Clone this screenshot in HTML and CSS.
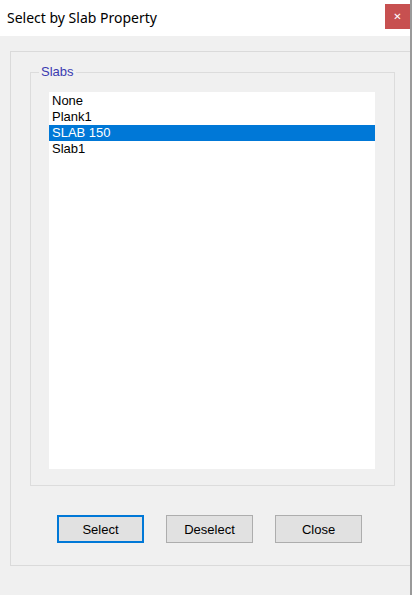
FILE: index.html
```html
<!DOCTYPE html>
<html>
<head>
<meta charset="utf-8">
<link rel="stylesheet" href="styles.css">
</head>
<body>
<div class="window">
  <div class="titlebar">
    <span class="title">Select by Slab Property</span>
    <span class="close">&#x2715;</span>
  </div>
  <div class="client">
    <div class="panel">
      <fieldset class="group">
        <legend class="group-label">Slabs</legend>
        <ul class="listbox">
          <li class="item">None</li>
          <li class="item">Plank1</li>
          <li class="item selected">SLAB 150</li>
          <li class="item">Slab1</li>
        </ul>
      </fieldset>
      <div class="buttons">
        <button class="btn default">Select</button>
        <button class="btn">Deselect</button>
        <button class="btn">Close</button>
      </div>
    </div>
  </div>
</div>
</body>
</html>
```
FILE: styles.css
```css
html, body {
  margin: 0;
  padding: 0;
  background: #f0f0f0;
}
body {
  width: 412px;
  height: 595px;
  overflow: hidden;
  font-family: "Liberation Sans", Arial, sans-serif;
  font-size: 13px;
}
.window {
  box-sizing: border-box;
  width: 412px;
  height: 595px;
  border-right: 2px solid #9a9a9a;
  display: flex;
  flex-direction: column;
}
.titlebar {
  height: 36px;
  background: #ffffff;
  display: flex;
  align-items: center;
  justify-content: space-between;
  padding-left: 7px;
  flex-shrink: 0;
}
.title {
  font-family: "Noto Sans", "Open Sans", sans-serif;
  font-size: 14px;
  color: #000;
  margin-top: -2px;
}
.close {
  width: 25px;
  height: 25px;
  margin-top: -4px;
  background: #c75050;
  color: #fff;
  font-family: "DejaVu Sans", sans-serif;
  font-size: 10px;
  font-weight: bold;
  display: flex;
  align-items: center;
  justify-content: center;
}
.client {
  flex: 1;
  padding: 15px 0 0 10px;
  display: flex;
  flex-direction: column;
}
.panel {
  box-sizing: border-box;
  height: 515px;
  border: 1px solid #dadada;
  border-right: none;
  padding: 12px 0 0 19px;
  display: flex;
  flex-direction: column;
}
.group {
  box-sizing: border-box;
  width: 365px;
  height: 422px;
  margin: 0;
  padding: 12px 18px 16px 18px;
  border: 1px solid #dcdcdc;
}
.group-label {
  color: #3a3ab0;
  padding: 0 2px;
  margin-left: -10px;
  font-size: 13px;
  line-height: 16px;
}
.listbox {
  list-style: none;
  margin: 0;
  padding: 1px 0 0 0;
  background: #ffffff;
  width: 326px;
  height: 377px;
  box-sizing: border-box;
}
.item {
  height: 16px;
  line-height: 16px;
  padding-left: 3px;
  color: #000;
}
.item.selected {
  background: #0078d7;
  color: #fff;
}
.buttons {
  display: flex;
  gap: 22px;
  margin-top: 29px;
  padding-left: 27px;
}
.btn {
  box-sizing: border-box;
  width: 87px;
  height: 28px;
  background: #e1e1e1;
  border: 1px solid #adadad;
  font-family: "Liberation Sans", Arial, sans-serif;
  font-size: 13px;
  color: #000;
  padding: 0;
}
.btn.default {
  border: 2px solid #0078d7;
}
```
